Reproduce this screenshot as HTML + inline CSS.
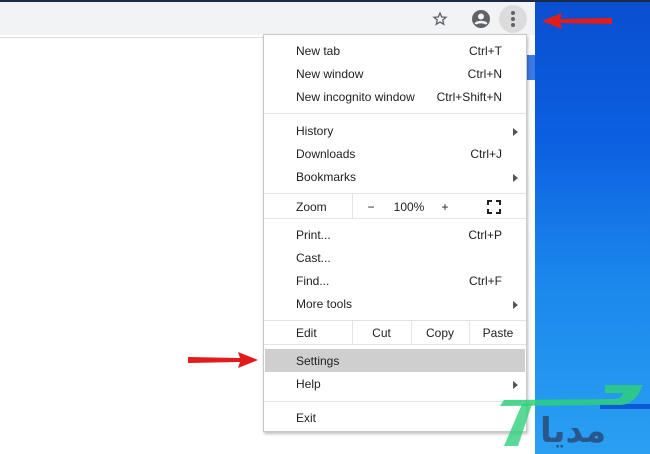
<!DOCTYPE html>
<html><head><style>
*{margin:0;padding:0;box-sizing:border-box}
body{width:650px;height:454px;overflow:hidden;position:relative;background:#fff;font-family:"Liberation Sans",sans-serif;font-size:12px;color:#202124}
.top{position:absolute;left:0;top:0;width:650px;height:2px;background:#1c2a4a}
.tb{position:absolute;left:0;top:2px;width:535px;height:33px;background:#f1f3f4}
.ln{position:absolute;left:0;top:37px;width:263px;height:1px;background:#ddd}
.blue{position:absolute;left:535px;top:2px;width:115px;height:452px;background:linear-gradient(180deg,#0a4fd0 0%,#0b5fe0 30%,#1a86ec 60%,#2aa0f2 100%)}
.strip{position:absolute;left:527px;top:55px;width:8px;height:25px;background:#3d79e6}
.menu{position:absolute;left:263px;top:34px;width:264px;height:398px;background:#fff;border:1px solid #c8c8c8;box-shadow:1px 2px 3px rgba(0,0,0,.25)}
.it{position:absolute;left:32px;right:24px;height:23px;line-height:23px;top:0}
.it span{position:absolute;right:0}
.arr{position:absolute;right:-16px;top:8px;width:0;height:0;border-left:5px solid #555;border-top:4px solid transparent;border-bottom:4px solid transparent}
.sep{position:absolute;left:0;right:0;height:1px;background:#e3e3e3}
.vd{position:absolute;width:1px;background:#e3e3e3}
.hl{position:absolute;left:1px;right:1px;top:314px;height:23px;background:#cfcfcf}
.c{position:absolute;text-align:center;line-height:24px}
</style></head><body>
<div class="top"></div>
<div class="tb"></div>
<div class="ln"></div>
<div class="blue"></div>
<div style="position:absolute;left:600px;top:404px;width:50px;height:5px;background:#0c58d6"></div>
<div class="strip"></div>
<svg style="position:absolute;left:432px;top:11px" width="16" height="16" viewBox="0 0 24 24"><path d="M12 3l2.6 6 6.4.5-4.9 4.2 1.5 6.3L12 16.6 6.4 20l1.5-6.3L3 9.5l6.4-.5z" fill="none" stroke="#5f6368" stroke-width="2"/></svg>
<svg style="position:absolute;left:471px;top:9px" width="20" height="20" viewBox="0 0 20 20"><circle cx="10" cy="10" r="9" fill="#5f6368"/><circle cx="10" cy="7.5" r="3" fill="#f1f3f4"/><path d="M4.5 15c1.5-2.5 9.5-2.5 11 0" stroke="#f1f3f4" stroke-width="2.5" fill="none"/></svg>
<div style="position:absolute;left:499px;top:5px;width:28px;height:28px;border-radius:50%;background:#dcdcdc"></div>
<div style="position:absolute;left:511px;top:11px;width:4px;height:4px;border-radius:2px;background:#5f6368;box-shadow:0 6px 0 #5f6368,0 12px 0 #5f6368"></div>
<svg style="position:absolute;left:540px;top:10px" width="75" height="22"><path d="M2 11 L22 3 L20 9 L72 8 L72 14 L20 13 L22 19 Z" fill="#e41b1b"/></svg>
<svg style="position:absolute;left:185px;top:349px" width="75" height="22"><path d="M73 11 L53 3 L55 9 L3 8 L3 14 L55 13 L53 19 Z" fill="#e41b1b"/></svg>
<div class="menu">
<div class="it" style="top:5px">New tab<span>Ctrl+T</span></div>
<div class="it" style="top:28px">New window<span>Ctrl+N</span></div>
<div class="it" style="top:51px">New incognito window<span>Ctrl+Shift+N</span></div>
<div class="sep" style="top:78px"></div>
<div class="it" style="top:85px">History<i class="arr"></i></div>
<div class="it" style="top:108px">Downloads<span>Ctrl+J</span></div>
<div class="it" style="top:131px">Bookmarks<i class="arr"></i></div>
<div class="sep" style="top:158px"></div>
<div class="it" style="top:161px">Zoom</div>
<div class="vd" style="left:88px;top:159px;height:24px"></div>
<div class="c" style="left:100px;top:160px;width:14px">−</div>
<div class="c" style="left:125px;top:160px;width:40px">100%</div>
<div class="c" style="left:174px;top:160px;width:14px">+</div>
<svg style="position:absolute;left:223px;top:165px" width="14" height="14" viewBox="0 0 14 14" fill="none" stroke="#202124" stroke-width="2"><path d="M1 5V1h4M9 1h4v4M13 9v4H9M5 13H1V9"/></svg>
<div class="sep" style="top:183px"></div>
<div class="it" style="top:189px">Print...<span>Ctrl+P</span></div>
<div class="it" style="top:212px">Cast...</div>
<div class="it" style="top:235px">Find...<span>Ctrl+F</span></div>
<div class="it" style="top:258px">More tools<i class="arr"></i></div>
<div class="sep" style="top:285px"></div>
<div class="it" style="top:287px">Edit</div>
<div class="vd" style="left:88px;top:285px;height:24px"></div>
<div class="c" style="left:88px;top:286px;width:59px">Cut</div>
<div class="vd" style="left:147px;top:285px;height:24px"></div>
<div class="c" style="left:147px;top:286px;width:58px">Copy</div>
<div class="vd" style="left:205px;top:285px;height:24px"></div>
<div class="c" style="left:205px;top:286px;width:58px">Paste</div>
<div class="sep" style="top:309px"></div>
<div class="hl"></div>
<div class="it" style="top:315px">Settings</div>
<div class="it" style="top:338px">Help<i class="arr"></i></div>
<div class="sep" style="top:366px"></div>
<div class="it" style="top:372px">Exit</div>
</div>
<svg style="position:absolute;left:480px;top:380px" width="170" height="74">
<path d="M125 5 L163 5 L158 15 Q150 25 140 25 L20 26 L24 20 L135 19 Q142 18 143 13 L125 13 Z" fill="#2ecf7a" opacity=".85"/>
<path d="M42 24 L52 24 L38 66 L24 66 Z" fill="#2ecf7a" opacity=".8"/>
<text x="60" y="62" font-family="DejaVu Sans,sans-serif" font-size="34" font-weight="bold" fill="#2a4a7a" opacity=".85">مدیا</text>
</svg>
</body></html>
